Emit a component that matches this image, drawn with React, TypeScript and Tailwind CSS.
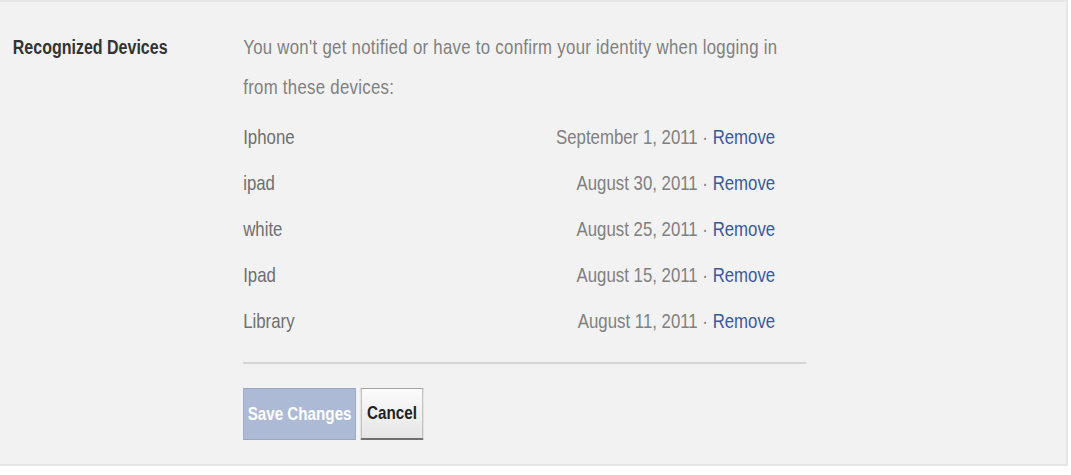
const devices = [
  { name: "Iphone", date: "September 1, 2011" },
  { name: "ipad", date: "August 30, 2011" },
  { name: "white", date: "August 25, 2011" },
  { name: "Ipad", date: "August 15, 2011" },
  { name: "Library", date: "August 11, 2011" },
];

// the old settings page used a narrow face; squeeze Liberation Sans to match
export default function App() {
  return (
    <div className="h-[475px] w-[1071px] bg-white font-['Liberation_Sans',Arial,sans-serif]">
      <div className="h-[466px] w-[1068px] overflow-hidden border-y-2 border-r-2 border-[#e6e6e6] bg-[#f2f2f2] pt-[25px]">
        <div className="flex w-[1335px] origin-top-left scale-x-[0.8]">
          <div className="w-[304px] shrink-0 pl-[16px]">
            <h3 className="text-[20px] font-bold leading-[40px] text-[#333]">
              Recognized Devices
            </h3>
          </div>
          <div className="w-[704px]">
            <p className="w-[690px] text-[21px] leading-[40px] tracking-[0.35px] text-[#808080]">
              You won't get notified or have to confirm your identity when logging in
              from these devices:
            </p>
            <ul className="mt-[7px] w-[665px]">
              {devices.map((device) => (
                <li
                  key={device.date}
                  className="flex h-[46px] items-center justify-between text-[21px]"
                >
                  <span className="text-[#6f6f6f]">{device.name}</span>
                  <span className="text-[#808080]">
                    {device.date} ·{" "}
                    <a href="#" className="text-[#3b5998]">
                      Remove
                    </a>
                  </span>
                </li>
              ))}
            </ul>
            <div className="mt-[18px] h-[2px] w-full bg-[#d4d4d4]" />
            <div className="mt-[24px] flex gap-[6px]">
              <button
                type="button"
                disabled
                className="h-[52px] w-[141px] whitespace-nowrap border border-[#9aa8c6] bg-[#adbad6] text-[19px] font-bold text-white"
              >
                Save Changes
              </button>
              <button
                type="button"
                className="h-[52px] w-[78px] border border-[#a5a5a5] border-b-2 border-b-[#6f6f6f] bg-[linear-gradient(#fbfbfb,#e6e6e6)] text-[19px] font-bold text-[#222]"
              >
                Cancel
              </button>
            </div>
          </div>
        </div>
      </div>
    </div>
  );
}
